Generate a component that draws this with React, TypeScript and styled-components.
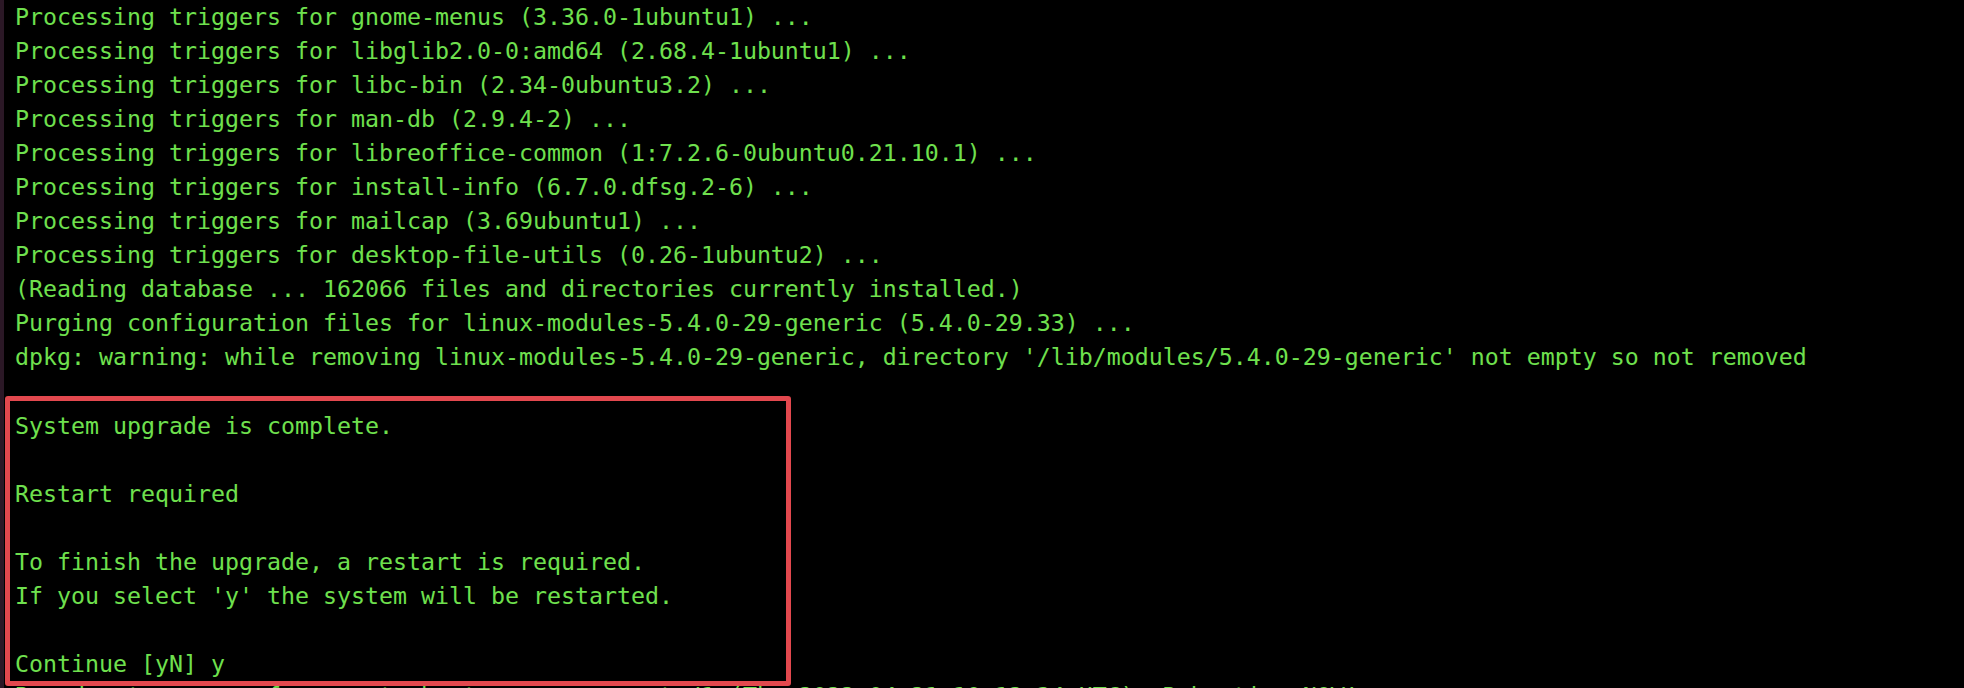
import React from "react";
import styled, { createGlobalStyle } from "styled-components";

const GlobalStyle = createGlobalStyle`
  html, body {
    margin: 0;
    padding: 0;
    background: #000;
    overflow: hidden;
  }
`;

const Screen = styled.div`
  width: 1964px;
  height: 688px;
  box-sizing: border-box;
  background: #000;
  border-left: 4px solid #2b1826;
  overflow: hidden;
  font-family: "DejaVu Sans Mono", "Liberation Mono", monospace;
  font-size: 23.25px;
  color: #6fe04e;
`;

const Line = styled.div`
  height: 34px;
  line-height: 34px;
  padding-left: 11px;
  white-space: pre;
`;

const BoxLine = styled(Line)`
  padding-left: 0;
`;

const TrailingLine = styled(Line)`
  margin-top: -7px;
`;

const Highlight = styled.div`
  position: relative;
  z-index: 1;
  box-sizing: border-box;
  width: 786px;
  margin: 22px 0 0 1px;
  border: 5px solid #e2484e;
  border-radius: 3px;
  padding: 8px 0 0 5px;
  background: #000;
`;

const outputLines = [
  "Processing triggers for gnome-menus (3.36.0-1ubuntu1) ...",
  "Processing triggers for libglib2.0-0:amd64 (2.68.4-1ubuntu1) ...",
  "Processing triggers for libc-bin (2.34-0ubuntu3.2) ...",
  "Processing triggers for man-db (2.9.4-2) ...",
  "Processing triggers for libreoffice-common (1:7.2.6-0ubuntu0.21.10.1) ...",
  "Processing triggers for install-info (6.7.0.dfsg.2-6) ...",
  "Processing triggers for mailcap (3.69ubuntu1) ...",
  "Processing triggers for desktop-file-utils (0.26-1ubuntu2) ...",
  "(Reading database ... 162066 files and directories currently installed.)",
  "Purging configuration files for linux-modules-5.4.0-29-generic (5.4.0-29.33) ...",
  "dpkg: warning: while removing linux-modules-5.4.0-29-generic, directory '/lib/modules/5.4.0-29-generic' not empty so not removed",
];

const boxLines = [
  "System upgrade is complete.",
  "",
  "Restart required",
  "",
  "To finish the upgrade, a restart is required.",
  "If you select 'y' the system will be restarted.",
  "",
  "Continue [yN] y",
];

export default function App() {
  return (
    <>
      <GlobalStyle />
      <Screen>
        {outputLines.map((l, i) => (
          <Line key={i}>{l}</Line>
        ))}
        <Highlight>
          {boxLines.map((l, i) => (
            <BoxLine key={i}>{l}</BoxLine>
          ))}
        </Highlight>
        <TrailingLine>
          Broadcast message from root@ubuntu-server on pts/1 (Thu 2022-04-21 10:12:34 UTC): Rebooting NOW!
        </TrailingLine>
      </Screen>
    </>
  );
}
